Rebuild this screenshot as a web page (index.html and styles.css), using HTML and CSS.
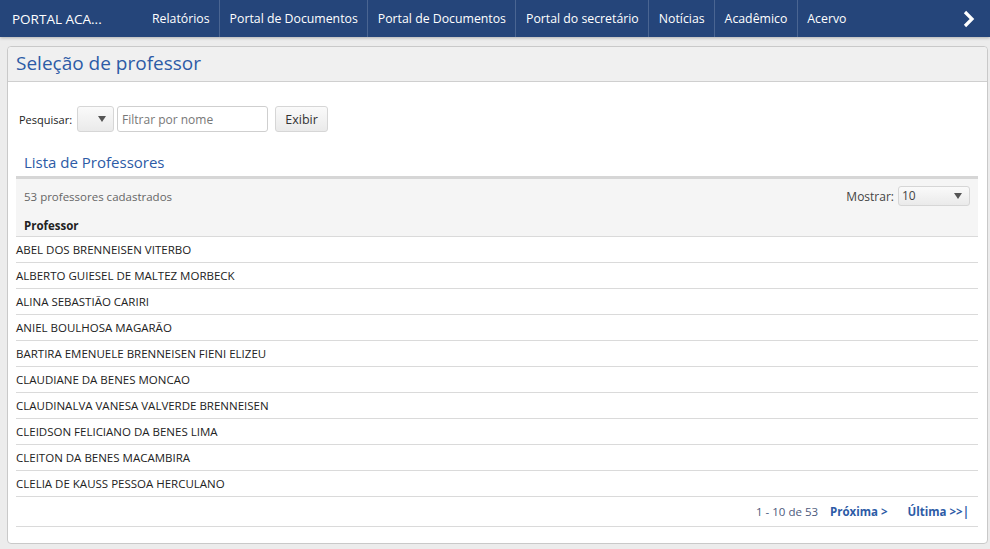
FILE: index.html
```html
<!DOCTYPE html>
<html lang="pt-BR">
<head>
    <meta charset="UTF-8">
    <meta name="viewport" content="width=device-width, initial-scale=1.0">
    <title>Seleção de professor</title>
    <link rel="stylesheet" href="styles.css">
</head>
<body>
    <nav class="navbar">
        <div class="brand">PORTAL ACA...</div>
        <ul class="menu">
            <li>Relatórios</li>
            <li>Portal de Documentos</li>
            <li>Portal de Documentos</li>
            <li>Portal do secretário</li>
            <li>Notícias</li>
            <li>Acadêmico</li>
            <li class="last">Acervo</li>
        </ul>
        <div class="more">
            <svg width="14" height="18" viewBox="0 0 14 18"><path d="M3 2 L10 9 L3 16" fill="none" stroke="#fff" stroke-width="3.2" stroke-linejoin="miter"/></svg>
        </div>
    </nav>

    <div class="panel">
        <div class="panel-header">Seleção de professor</div>
        <div class="panel-body">
            <form class="search">
                <label>Pesquisar:</label>
                <div class="select small"><span></span><i class="caret"></i></div>
                <input type="text" placeholder="Filtrar por nome">
                <button type="button">Exibir</button>
            </form>

            <h2 class="list-title">Lista de Professores</h2>
            <div class="list-toolbar">
                <span class="count">53 professores cadastrados</span>
                <div class="show">
                    <span>Mostrar:</span>
                    <div class="select wide"><span>10</span><i class="caret"></i></div>
                </div>
            </div>
            <div class="col-head">Professor</div>
            <ul class="rows">
                <li>ABEL DOS BRENNEISEN VITERBO</li>
                <li>ALBERTO GUIESEL DE MALTEZ MORBECK</li>
                <li>ALINA SEBASTIÃO CARIRI</li>
                <li>ANIEL BOULHOSA MAGARÃO</li>
                <li>BARTIRA EMENUELE BRENNEISEN FIENI ELIZEU</li>
                <li>CLAUDIANE DA BENES MONCAO</li>
                <li>CLAUDINALVA VANESA VALVERDE BRENNEISEN</li>
                <li>CLEIDSON FELICIANO DA BENES LIMA</li>
                <li>CLEITON DA BENES MACAMBIRA</li>
                <li>CLELIA DE KAUSS PESSOA HERCULANO</li>
            </ul>
            <div class="pager">
                <span class="range">1 - 10 de 53</span>
                <a class="next">Próxima &gt;</a>
                <a class="last-page">Última &gt;&gt;|</a>
            </div>
        </div>
    </div>
</body>
</html>
```

FILE: styles.css
```css
body {
    font-family: 'Open Sans', 'Noto Sans', sans-serif;
    background-color: #ececec;
    color: #222;
    margin: 0;
    padding: 0;
}
.navbar {
    height: 37px;
    background-color: #25457a;
    color: #fff;
    display: flex;
    align-items: stretch;
    box-shadow: 0 1px 3px rgba(0, 0, 0, 0.25);
}
.brand {
    font-size: 13.5px;
    line-height: 38px;
    padding-left: 12px;
    width: 128px;
}
.menu {
    list-style: none;
    margin: 0;
    padding: 0 0 0 12px;
    display: flex;
    flex: 1;
}
.menu li {
    font-size: 12.3px;
    line-height: 38px;
    padding: 0 9.5px;
    border-right: 1px solid #4a6592;
}
.menu li:first-child {
    padding-left: 0;
}
.menu li.last {
    border-right: none;
}
.more {
    display: flex;
    align-items: center;
    padding-right: 14px;
}
.panel {
    margin: 9px 2px 0 7px;
    background-color: #fff;
    border: 1px solid #c9c9c9;
    border-radius: 4px;
    height: 498px;
    box-sizing: border-box;
}
.panel-header {
    background-color: #f0f0f0;
    border-bottom: 1px solid #cfcfcf;
    border-radius: 4px 4px 0 0;
    height: 34px;
    line-height: 33px;
    padding-left: 8px;
    font-size: 19px;
    color: #2d5ba6;
}
.panel-body {
    padding: 24px 9px 0 8px;
}
.search {
    display: flex;
    align-items: center;
    gap: 3px;
    padding-left: 3px;
    height: 26px;
}
.search label {
    font-size: 11px;
    margin-right: 2px;
}
.select {
    box-sizing: border-box;
    border: 1px solid #d6d6d6;
    border-radius: 3px;
    background: linear-gradient(#fafafa, #eaeaea);
    display: flex;
    align-items: center;
    justify-content: space-between;
    font-size: 12px;
}
.select.small {
    width: 37px;
    height: 26px;
    padding-right: 7px;
}
.caret {
    width: 0;
    height: 0;
    border-left: 4px solid transparent;
    border-right: 4px solid transparent;
    border-top: 6px solid #555;
}
.search input {
    box-sizing: border-box;
    width: 151px;
    height: 26px;
    border: 1px solid #cfcfcf;
    border-radius: 3px;
    padding: 0 4px;
    font-family: inherit;
    font-size: 12px;
}
.search input::placeholder {
    color: #777;
}
.search button {
    margin-left: 4px;
    box-sizing: border-box;
    height: 26px;
    width: 53px;
    border: 1px solid #d6d6d6;
    border-radius: 3px;
    background: linear-gradient(#fafafa, #eaeaea);
    font-family: inherit;
    font-size: 12.5px;
    color: #333;
    padding: 0;
}
.list-title {
    font-weight: normal;
    font-size: 15px;
    color: #2d5ba6;
    margin: 19px 0 0 0;
    padding: 0 0 3px 8px;
    border-bottom: 3px solid #d6d6d6;
    line-height: 22px;
}
.list-toolbar {
    background-color: #f5f5f5;
    display: flex;
    justify-content: space-between;
    align-items: center;
    height: 34px;
    padding: 0 8px;
}
.count {
    font-size: 11.5px;
    color: #666;
}
.show {
    display: flex;
    align-items: center;
    gap: 4px;
    font-size: 12px;
    color: #444;
}
.select.wide {
    width: 72px;
    height: 20px;
    padding: 0 7px 0 3px;
    align-items: flex-end;
    padding-bottom: 1px;
}
.select.wide .caret {
    align-self: center;
}
.col-head {
    background-color: #f5f5f5;
    font-weight: bold;
    font-size: 11.5px;
    padding: 3px 8px 0;
    height: 20px;
    line-height: 20px;
    border-bottom: 1px solid #dadada;
}
.rows {
    list-style: none;
    margin: 0;
    padding: 0;
}
.rows li {
    font-size: 11.5px;
    height: 25px;
    line-height: 25px;
    border-bottom: 1px solid #dadada;
}
.pager {
    display: flex;
    justify-content: flex-end;
    align-items: center;
    gap: 12px;
    height: 29px;
    border-bottom: 1px solid #dadada;
    padding-right: 9px;
    font-size: 11.5px;
}
.range {
    color: #4d5a7c;
}
.pager a {
    font-weight: bold;
    color: #2d5ba6;
}
.pager .last-page {
    margin-left: 8px;
}
```
